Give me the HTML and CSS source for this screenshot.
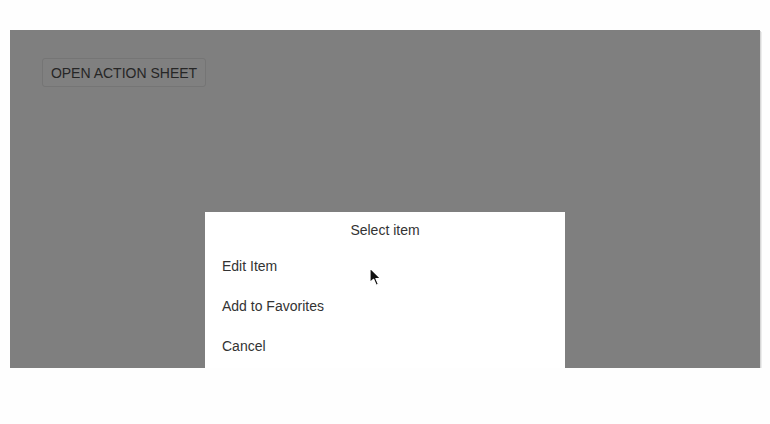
FILE: index.html
```html
<!DOCTYPE html>
<html lang="en">
<head>
<meta charset="utf-8">
<title>Action Sheet</title>
<link rel="stylesheet" href="styles.css">
</head>
<body>
<div class="stage">
  <button class="open-btn" type="button">OPEN ACTION SHEET</button>
  <div class="sheet">
    <div class="sheet-title">Select item</div>
    <div class="sheet-item">Edit Item</div>
    <div class="sheet-item">Add to Favorites</div>
    <div class="sheet-item">Cancel</div>
  </div>
  <svg class="cursor" width="14" height="20" viewBox="0 0 14 20" aria-hidden="true">
    <path d="M1 1 L1 15.5 L4.6 12.3 L7.2 18.2 L9.4 17.2 L6.9 11.5 L11.6 11.5 Z" fill="#111" stroke="#fff" stroke-width="1.2" stroke-linejoin="round"/>
  </svg>
</div>
</body>
</html>
```

FILE: styles.css
```css
html, body {
  margin: 0;
  padding: 0;
  background: #fefefe;
  font-family: "Liberation Sans", Arial, sans-serif;
}

.stage {
  position: relative;
  margin: 30px 0 0 10px;
  width: 750px;
  height: 338px;
  background: #7f7f7f;
  box-shadow: 1px 1px 0 #d6d6d6, 2px 2px 0 #ececec;
  overflow: hidden;
}

.open-btn {
  display: block;
  margin: 28px 0 0 32px;
  width: 164px;
  height: 29px;
  padding: 2px 0 0;
  border: 1px solid #757575;
  border-radius: 3px;
  background: #808080;
  color: #262626;
  font-family: "Liberation Sans", Arial, sans-serif;
  font-size: 14px;
  line-height: 25px;
  text-align: center;
}

.sheet {
  position: absolute;
  left: 195px;
  top: 182px;
  width: 360px;
  bottom: 0;
  background: #ffffff;
  color: #333333;
  font-size: 14px;
}

.sheet-title {
  height: 32px;
  padding-top: 2px;
  line-height: 33px;
  text-align: center;
}

.sheet-item {
  height: 40px;
  line-height: 40px;
  padding-left: 17px;
}

.cursor {
  position: absolute;
  left: 359px;
  top: 237px;
}
```
